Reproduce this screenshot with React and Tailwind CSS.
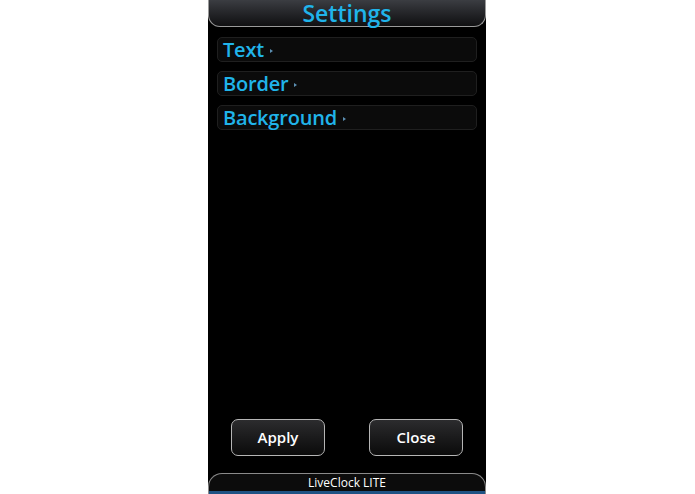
import React from 'react';

const font = { fontFamily: '"Open Sans", "Noto Sans", sans-serif' };

const items = ['Text', 'Border', 'Background'];

const MenuRow = ({ label }) => (
    <div className="h-[25px] flex items-center rounded-[5px] border border-[#1f1f1f] bg-[#0b0b0b] px-[5px]">
        <span className="text-[20px] leading-none font-semibold text-[#20b4ea] tracking-[-0.2px]">{label}</span>
        <span className="ml-[6px] mt-[3px] w-0 h-0 border-y-[2.5px] border-y-transparent border-l-[3px] border-l-[#5c8fb2]" />
    </div>
);

const Button = ({ label }) => (
    <button className="w-[94px] h-[37px] rounded-[7px] border border-[#b5b5b5] bg-gradient-to-b from-[#2c2c2e] to-[#0b0b0b] text-white text-[15px] font-semibold">
        {label}
    </button>
);

export default function App() {
    return (
        <div className="w-full h-[494px] bg-white pr-[1px]" style={font}>
            <div className="mx-auto w-[278px] h-full bg-black flex flex-col">
                {/* 標題列 */}
                <div className="h-[27px] shrink-0 rounded-b-[12px] border border-t-0 border-[#9a9a9a] bg-gradient-to-b from-[#3b3d42] to-[#101012] flex items-start justify-center">
                    <span className="text-[23px] leading-[27px] font-semibold text-[#20b4ea]">Settings</span>
                </div>

                <div className="flex flex-col gap-[9px] px-[9px] pt-[10px]">
                    {items.map(i => <MenuRow key={i} label={i} />)}
                </div>

                <div className="mt-auto flex justify-between px-[23px]">
                    <Button label="Apply" />
                    <Button label="Close" />
                </div>

                {/* 底部 */}
                <div className="mt-[17px] h-[21px] shrink-0 rounded-t-[14px] border border-b-0 border-[#8a8a8a] bg-[#0c0c0c] flex flex-col overflow-hidden">
                    <div className="flex-1 flex items-center justify-center text-white text-[12px] leading-none">LiveClock LITE</div>
                    <div className="h-[3px] bg-[#1f5384]" />
                </div>
            </div>
        </div>
    );
}
